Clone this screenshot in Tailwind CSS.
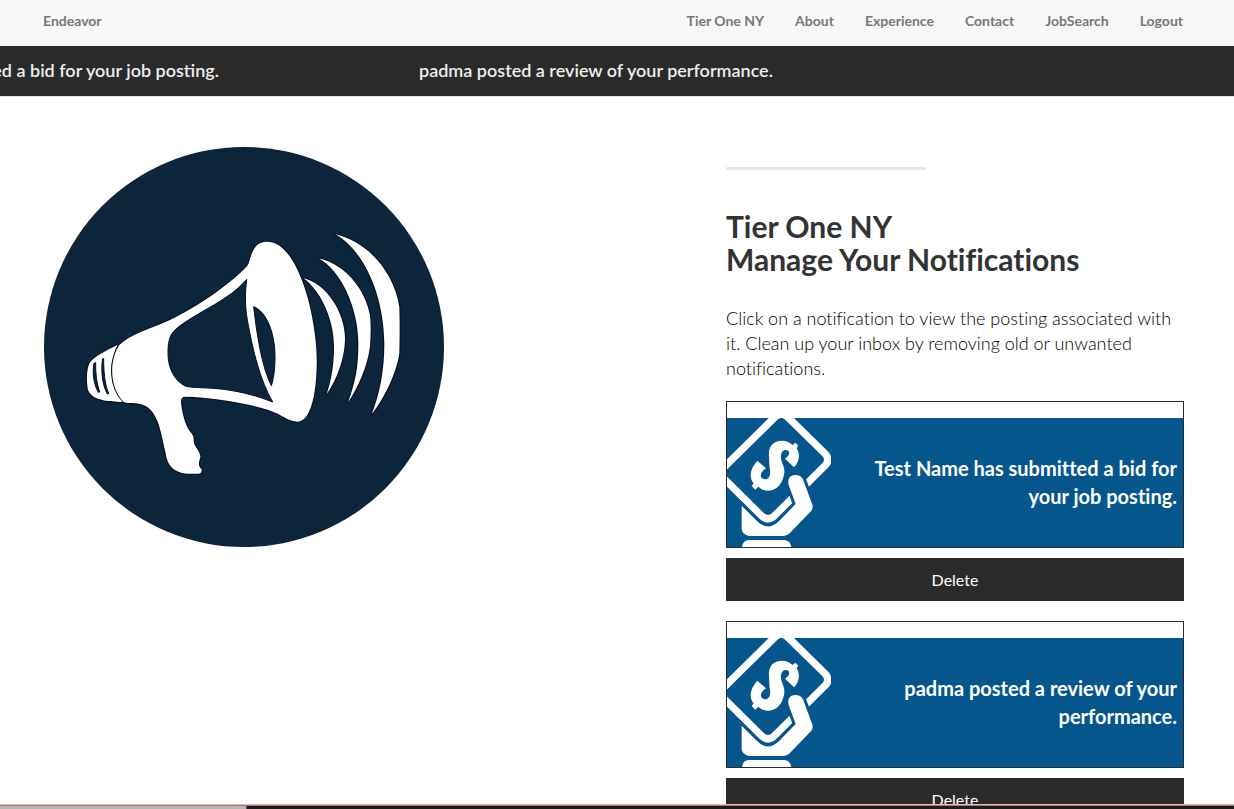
<!DOCTYPE html>
<html lang="en">
<head>
<meta charset="utf-8">
<meta name="viewport" content="width=device-width, initial-scale=1">
<title>Endeavor - Notifications</title>
<script src="https://cdn.jsdelivr.net/npm/@tailwindcss/browser@4"></script>
</head>
<body class="flex h-screen flex-col overflow-hidden bg-white font-['Lato',sans-serif] text-[#333] [font-variant-ligatures:none]">

<svg class="hidden" aria-hidden="true">
  <symbol id="payment" viewBox="15 18 312 387">
    <path d="M310 126Q325 143 310 160L158 311Q138 330 118 311L4 198Q-11 183 4 168L158 16Q178 -4 198 16Z" fill="none" stroke="#fff" stroke-width="22"/>
    <path transform="translate(-21 -51)" fill="#fff" d="M162 185C158 150 180 137 200 137C215 137 225 143 233 150L241 143L250 152L245 160C255 175 255 200 237 217L210 191C222 183 226 174 220 167C207 161 196 170 198 190C200 210 212 215 207 240C200 270 185 287 158 287C145 287 138 282 130 275L121 284L110 273L116 265C103 250 102 225 127 197L153 220C138 230 133 243 142 250C155 258 168 250 165 225C162 205 163 195 162 185Z"/>
    <path d="M59 281L105 327Q138 360 172 326L221 276L200 219Q194 190 220 189Q238 189 244 205L270 275Q275 285 268 296L203 364Q195 372 185 372H80Q59 365 59 350Z" fill="#fff" stroke="#05568d" stroke-width="18" paint-order="stroke"/>
    <path d="M60 406Q62 384 82 384H187Q206 386 208 406Z" fill="#fff"/>
  </symbol>
</svg>

<header class="shrink-0 bg-[#f8f8f8]">
  <nav class="mx-auto flex h-[46px] max-w-[1234px] items-center justify-between pr-[51px] pb-1 pl-[43px] text-sm font-bold text-[#777]">
    <a href="#">Endeavor</a>
    <ul class="flex gap-[31px]">
      <li><a href="#">Tier One NY</a></li>
      <li><a href="#">About</a></li>
      <li><a href="#">Experience</a></li>
      <li><a href="#">Contact</a></li>
      <li><a href="#">JobSearch</a></li>
      <li><a href="#">Logout</a></li>
    </ul>
  </nav>
</header>

<div class="flex h-[51px] shrink-0 items-center overflow-hidden border-b border-[#e7e7e7] bg-[#2a2a2a] pb-0.5 text-lg font-semibold text-[#eee] [font-variant-ligatures:normal]">
  <div class="flex w-[219px] shrink-0 justify-end"><span class="whitespace-nowrap">Test Name has submitted a bid for your job posting.</span></div>
  <span class="ml-[200px] whitespace-nowrap">padma posted a review of your performance.</span>
</div>

<main class="min-h-0 flex-1 overflow-y-auto [scrollbar-width:none]">
  <div class="mx-auto grid max-w-[1234px] grid-cols-[5fr_458px] gap-x-[30px] pt-[50px] pr-[50px] pl-11">
    <div>
      <svg class="w-full max-w-[400px]" viewBox="-78 -219 1200 1200" role="img" aria-label="Megaphone">
        <circle cx="522" cy="381" r="600" fill="#0d253b"/>
        <g fill="#fff" stroke="#020d26" stroke-width="6" paint-order="stroke" stroke-linejoin="round">
          <path d="M143 374C110 391 70 410 58 430C48 455 50 490 54 510C65 540 110 545 160 546C115 500 115 430 143 374Z"/>
          <path d="M148 375C180 342 240 328 300 300C380 262 470 200 525 145Q533 138 536 130C548 85 560 65 592 65C650 65 690 150 715 240C735 320 742 390 740 440C738 530 720 605 682 605C660 605 640 590 620 580C580 560 480 540 400 533Q370 530 345 530Q333 530 333 545C335 570 342 600 352 622C360 640 373 640 371 665C375 685 393 695 391 712C384 735 386 737 395 748Q397 760 385 761H350C310 758 291 735 287 700C275 650 270 610 250 580C230 550 205 550 175 549Q165 548 160 545C116 498 119 418 148 375Z"/>
          <g transform="translate(480 0)">
            <path d="M220 175C290 190 345 280 345 355C345 420 315 490 289 524C305 480 312 430 312 380C312 290 265 205 220 175Z"/>
            <path d="M266 115C350 135 405 210 420 285Q424 320 420 380C412 440 385 500 354 548C378 480 385 440 385 370C385 260 330 150 266 115Z"/>
            <path d="M316 43C410 65 490 150 508 260Q510 320 508 400C500 460 460 540 425 583C450 520 463 450 463 370C461 220 400 90 316 43Z"/>
          </g>
        </g>
        <g fill="#0d253b" stroke="#020d26" stroke-width="3">
          <path d="M530 178C500 215 450 245 400 273C350 303 320 320 305 342C295 360 294 380 294 400C294 440 310 480 345 498C360 503 400 503 430 505C500 510 560 527 608 546C570 480 548 390 532 300C525 260 525 220 530 178Z"/>
          <path d="M551 260C590 275 615 340 615 410C615 450 610 480 604 497C575 440 560 340 551 260Z"/>
          <path d="M77 428L72 430C66 460 72 495 85 517L89 516C80 490 76 460 77 428Z"/>
          <path d="M98 416C92 450 97 495 112 522L116 521C104 490 101 455 101 416Z"/>
        </g>
      </svg>
    </div>

    <div>
      <hr class="mt-5 w-[200px] border-0 border-t-[3px] border-[#e7e7e7]">
      <h2 class="mt-10 text-3xl/[33px] font-bold">Tier One NY<br>Manage Your Notifications</h2>
      <p class="mt-[30px] text-lg/[25px] font-light text-black">Click on a notification to view the posting associated with it. Clean up your inbox by removing old or unwanted notifications.</p>

      <ul class="mt-5 flex flex-col gap-5">
        <li class="flex flex-col gap-2.5">
          <a href="#" class="block border border-[#2a2a2a] pt-4">
            <span class="flex h-[129px] items-center justify-between bg-[#05568d] pr-1.5 text-right text-xl/7 font-bold text-white">
              <svg class="h-[129px] w-[104px] shrink-0" aria-hidden="true"><use href="#payment"/></svg>
              <span class="w-[310px] pb-0.5">Test Name has submitted a bid for your job posting.</span>
            </span>
          </a>
          <button type="button" class="h-[43px] cursor-pointer bg-[#2a2a2a] text-base text-white">Delete</button>
        </li>
        <li class="flex flex-col gap-2.5">
          <a href="#" class="block border border-[#2a2a2a] pt-4">
            <span class="flex h-[129px] items-center justify-between bg-[#05568d] pr-1.5 text-right text-xl/7 font-bold text-white">
              <svg class="h-[129px] w-[104px] shrink-0" aria-hidden="true"><use href="#payment"/></svg>
              <span class="w-[310px] pb-0.5">padma posted a review of your performance.</span>
            </span>
          </a>
          <button type="button" class="h-[43px] cursor-pointer bg-[#2a2a2a] text-base text-white">Delete</button>
        </li>
      </ul>
    </div>
  </div>
</main>

<footer class="shrink-0 border-t border-[#c8c8c8]">
  <div class="flex h-1 border-t border-[#c0696e] bg-[#1d1d1b]">
    <div class="w-1/5 border-r border-[#555] bg-[#b5b5b3]"></div>
  </div>
</footer>

</body>
</html>
